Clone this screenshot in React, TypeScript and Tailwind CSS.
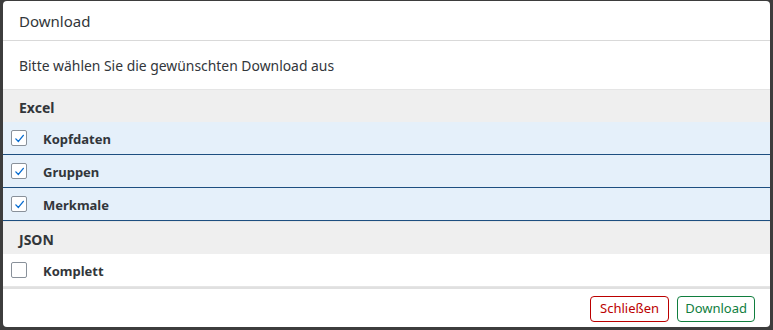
import { useState } from "react";

interface Item {
  name: string;
  checked: boolean;
}
interface Group {
  title: string;
  items: Item[];
}

const initialGroups: Group[] = [
  {
    title: "Excel",
    items: [
      { name: "Kopfdaten", checked: true },
      { name: "Gruppen", checked: true },
      { name: "Merkmale", checked: true },
    ],
  },
  {
    title: "JSON",
    items: [{ name: "Komplett", checked: false }],
  },
];

const CheckBox = ({ checked }: { checked: boolean }) => (
  <div className="flex items-center justify-center w-4 h-4 bg-white border border-[#89919a] rounded-[2px]">
    {checked && (
      <svg width="11" height="11" viewBox="0 0 12 12" fill="none">
        <path
          d="M2 6.4 L4.8 9.2 L10.2 2.6"
          stroke="#0a6ed1"
          strokeWidth="1.5"
          strokeLinecap="round"
          strokeLinejoin="round"
        />
      </svg>
    )}
  </div>
);

export default function App() {
  const [groups, setGroups] = useState(initialGroups);

  const toggle = (g: number, i: number) => {
    setGroups((prev) =>
      prev.map((group, gi) =>
        gi !== g
          ? group
          : {
              ...group,
              items: group.items.map((item, ii) =>
                ii === i ? { ...item, checked: !item.checked } : item,
              ),
            },
      ),
    );
  };

  return (
    <div
      className="w-[773px] h-[330px] bg-[#3d3d3d] pt-px px-[3px] pb-[3px]"
      style={{ fontFamily: '"Noto Sans", "Liberation Sans", sans-serif' }}
    >
      <div className="flex flex-col h-full bg-white rounded-[4px] overflow-hidden">
        {/* Header */}
        <div className="flex items-center h-[40px] px-4 pt-px border-b border-[#d9d9d9] text-[15px] text-[#32363a]">
          Download
        </div>

        {/* Subtitle */}
        <div className="flex items-center h-[48px] px-4 pt-[2px] text-[13.9px] text-[#32363a]">
          Bitte wählen Sie die gewünschten Download aus
        </div>

        {/* List */}
        <div className="flex flex-col">
          {groups.map((group, g) => (
            <div key={group.title} className="flex flex-col">
              <div className="flex items-center h-[33px] px-4 pt-[2px] bg-[#efefef] border-t border-[#e5e5e5] text-[14px] font-bold text-[#32363a]">
                {group.title}
              </div>
              {group.items.map((item, i) => (
                <div
                  key={item.name}
                  onClick={() => toggle(g, i)}
                  className={`flex items-center h-[33px] pl-2 gap-4 cursor-pointer border-b ${
                    item.checked
                      ? "bg-[#e5f0fa] border-[#1d4f80]"
                      : "bg-white border-[#e5e5e5]"
                  }`}
                >
                  <CheckBox checked={item.checked} />
                  <span className="pt-[3px] text-[13px] font-bold text-[#32363a]">
                    {item.name}
                  </span>
                </div>
              ))}
            </div>
          ))}
        </div>

        {/* Footer */}
        <div className="flex items-center justify-end gap-2 flex-1 px-[15px] pt-px border-t-2 border-[#e0e0e0]">
          <button className="h-[26px] px-[9px] rounded-[4px] border border-[#bb0000] bg-white text-[13px] text-[#bb0000]">
            Schließen
          </button>
          <button className="h-[26px] px-[7px] rounded-[4px] border border-[#107e3e] bg-white text-[13px] text-[#107e3e]">
            Download
          </button>
        </div>
      </div>
    </div>
  );
}
